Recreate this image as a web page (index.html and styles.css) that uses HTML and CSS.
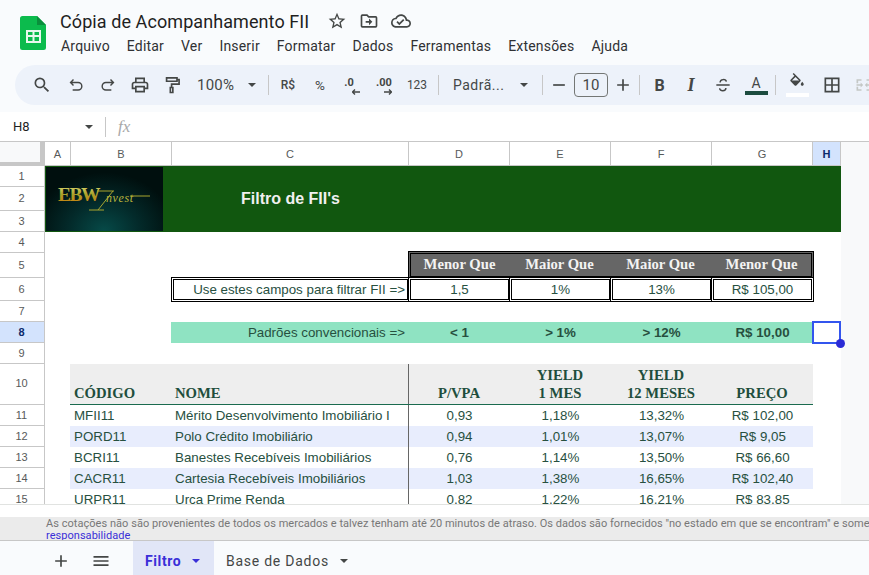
FILE: index.html
```html
<!DOCTYPE html>
<html lang="pt-BR">
<head>
<meta charset="utf-8">
<title>Cópia de Acompanhamento FII</title>
<link rel="stylesheet" href="styles.css">
</head>
<body>
<div class="app">
  <header class="top">
    <svg class="logo-sheets" viewBox="0 0 26 34" width="26" height="34">
      <path d="M2.5 0H17l9 9v22.5a2.5 2.5 0 0 1-2.5 2.5h-21A2.5 2.5 0 0 1 0 31.500V2.500A2.500 2.500 0 0 1 2.500 0z" fill="#0cbb4d"/>
      <path d="M17 0l9 9h-9z" fill="#0a8f3c"/>
      <path d="M6 14h15v13H6zm2 2v3h4.500v-3zm6.500 0v3H19v-3zM8 21v4h4.500v-4zm6.500 0v4H19v-4z" fill="#e9f8ee" fill-rule="evenodd"/>
    </svg>
    <div class="top-main">
      <div class="title-row">
        <span class="doc-title">Cópia de Acompanhamento FII</span>
        <svg class="ti" viewBox="0 0 24 24" width="20" height="20"><path d="M22 9.240l-7.190-.620L12 2 9.190 8.630 2 9.240l5.460 4.730L5.820 21 12 17.270 18.180 21l-1.630-7.030L22 9.240zM12 15.400l-3.760 2.270 1-4.280-3.320-2.880 4.380-.380L12 6.100l1.710 4.040 4.380.380-3.320 2.880 1 4.280L12 15.400z"/></svg>
        <svg class="ti" viewBox="0 0 24 24" width="20" height="20"><path d="M20 6h-8l-2-2H4a2 2 0 0 0-2 2v12a2 2 0 0 0 2 2h16a2 2 0 0 0 2-2V8a2 2 0 0 0-2-2zm0 12H4V6h5.170l2 2H20v10zm-8-1l4-4-4-4v3H8v2h4v3z"/></svg>
        <svg class="ti" viewBox="0 0 24 24" width="20" height="20"><path d="M19.350 10.040C18.670 6.590 15.640 4 12 4 9.110 4 6.600 5.640 5.350 8.040 2.340 8.360 0 10.910 0 14c0 3.310 2.690 6 6 6h13c2.760 0 5-2.240 5-5 0-2.640-2.050-4.780-4.650-4.960zM19 18H6c-2.210 0-4-1.790-4-4 0-2.050 1.530-3.760 3.560-3.970l1.070-.110.500-.950C8.080 7.140 9.940 6 12 6c2.620 0 4.880 1.860 5.390 4.430l.300 1.500 1.530.110c1.560.100 2.780 1.410 2.780 2.960 0 1.650-1.350 3-3 3zm-9-3.820l-2.090-2.090L6.500 13.500 10 17l6.010-6.010-1.410-1.410z"/></svg>
      </div>
      <nav class="menu">
        <span>Arquivo</span><span>Editar</span><span>Ver</span><span>Inserir</span><span>Formatar</span><span>Dados</span><span>Ferramentas</span><span>Extensões</span><span>Ajuda</span>
      </nav>
    </div>
  </header>

  <div class="toolbar">
    <span class="tb"><svg viewBox="0 0 24 24" width="20" height="20"><path d="M15.500 14h-.790l-.280-.270A6.471 6.471 0 0 0 16 9.500 6.500 6.500 0 1 0 9.500 16c1.610 0 3.090-.590 4.230-1.570l.270.280v.790l5 4.990L20.490 19l-4.990-5zm-6 0C7.010 14 5 11.990 5 9.500S7.010 5 9.500 5 14 7.010 14 9.500 11.990 14 9.500 14z"/></svg></span>
    <span class="tb tb-first"><svg class="line thin" viewBox="0 0 24 24" width="20" height="20"><path d="M6 9h8.500a4.500 4.500 0 0 1 0 9H8M9 5.500 5.500 9 9 12.500"/></svg></span>
    <span class="tb"><svg class="line thin" viewBox="0 0 24 24" width="20" height="20"><path d="M18 9H9.500a4.500 4.500 0 0 0 0 9H16M15 5.500 18.500 9 15 12.500"/></svg></span>
    <span class="tb"><svg viewBox="0 0 24 24" width="20" height="20"><path d="M19 8h-1V3H6v5H5c-1.660 0-3 1.340-3 3v6h4v4h12v-4h4v-6c0-1.660-1.340-3-3-3zM8 5h8v3H8V5zm8 12v2H8v-4h8v2zm2-2v-2H6v2H4v-4c0-.550.450-1 1-1h14c.550 0 1 .450 1 1v4h-2z"/></svg></span>
    <span class="tb"><svg class="line" viewBox="0 0 24 24" width="20" height="20"><path d="M18 3.500H5.500v4H18zM18 5.500h2.500v5.500H11.500v4M10 15h3v6h-3z"/></svg></span>
    <span class="zoom"><span>100%</span><i class="caret"></i></span>
    <i class="sep"></i>
    <span class="tb small strong">R$</span>
    <span class="tb pct">%</span>
    <span class="tb dec dec-one"><b>.0</b><svg viewBox="0 0 8 6" width="8" height="6"><path d="M.5 3h7.500M3 .5.500 3 3 5.500" class="stroke"/></svg></span>
    <span class="tb dec"><b>.00</b><svg viewBox="0 0 8 6" width="8" height="6"><path d="M0 3h7.500M5 .5 7.500 3 5 5.500" class="stroke"/></svg></span>
    <span class="tb small num">123</span>
    <i class="sep sep-b"></i>
    <span class="font"><span>Padrã...</span><i class="caret"></i></span>
    <i class="sep sep-c"></i>
    <span class="tb tb-s"><svg viewBox="0 0 24 24" width="20" height="20"><path d="M5 11h14v2H5z"/></svg></span>
    <span class="size">10</span>
    <span class="tb tb-s"><svg viewBox="0 0 24 24" width="20" height="20"><path d="M19 13h-6v6h-2v-6H5v-2h6V5h2v6h6z"/></svg></span>
    <i class="sep sep-d"></i>
    <span class="tb glyph bold">B</span>
    <span class="tb glyph ital">I</span>
    <span class="tb"><svg class="line thin" viewBox="0 0 24 24" width="20" height="20"><path d="M4 12h16M8.500 9c0-4.500 7-4.500 7.500-1M15.500 15.500c0 4.500-7.500 4.500-7.500 .5"/></svg></span>
    <span class="tb color"><span class="a">A</span><i class="bar bar-green"></i></span>
    <i class="sep sep-e"></i>
    <span class="tb color"><svg viewBox="0 0 24 24" width="18" height="18"><path d="M16.560 8.940 7.620 0 6.210 1.410l2.380 2.380-5.150 5.150c-.590.590-.590 1.540 0 2.120l5.500 5.500c.290.290.680.440 1.060.440s.770-.150 1.060-.440l5.500-5.500c.590-.580.590-1.530 0-2.120zM5.210 10 10 5.210 14.790 10H5.210zM19 11.500s-2 2.170-2 3.500c0 1.100.900 2 2 2s2-.900 2-2c0-1.330-2-3.500-2-3.500z"/></svg><i class="bar bar-white"></i></span>
    <span class="tb tb-gap"><svg viewBox="0 0 24 24" width="20" height="20"><path d="M3 3v18h18V3H3zm8 16H5v-6h6v6zm0-8H5V5h6v6zm8 8h-6v-6h6v6zm0-8h-6V5h6v6z"/></svg></span>
    <span class="tb merge"><svg viewBox="0 0 24 24" width="20" height="20"><path d="M3 5h6v2H5v3H3zM3 14h2v3h4v2H3zM15 5h6v5h-2V7h-4zM19 14h2v5h-6v-2h4zM3 11h5V9l3 3-3 3v-2H3zM21 11h-5V9l-3 3 3 3v-2h5z"/></svg></span>
  </div>

  <div class="formula">
    <span class="ref">H8</span><i class="caret caret-ref"></i><i class="sep sep-f"></i><span class="fx">fx</span>
  </div>

  <main class="sheet">
    <div class="corner"></div>
    <div class="colhead">
      <span>A</span><span>B</span><span>C</span><span>D</span><span>E</span><span>F</span><span>G</span><span class="on">H</span>
    </div>
    <div class="rowhead">
      <span class="h21">1</span><span class="h24">2</span><span class="h21">3</span><span class="h21">4</span><span class="h25">5</span><span class="h23">6</span><span class="h21">7</span><span class="h21 on">8</span><span class="h21">9</span><span class="h41">10</span><span class="h21">11</span><span class="h21">12</span><span class="h21">13</span><span class="h21">14</span><span class="h21">15</span>
    </div>
    <div class="cells">
      <div class="banner">
        <div class="brand">
          <svg viewBox="0 0 117 63" width="117" height="63">
            <defs>
              <linearGradient id="gold" x1="0" y1="0" x2="0" y2="1"><stop offset="0" stop-color="#e2e07a"/><stop offset=".5" stop-color="#a9a02a"/><stop offset="1" stop-color="#d07a08"/></linearGradient>
            </defs>
            <text x="12" y="34" class="ebw" fill="url(#gold)">EBW</text>
            <path d="M51 24h17M67 24 52 43M43 43h15M84 29h20" class="flourish"/>
            <text x="60" y="35" class="invest">nvest</text>
          </svg>
        </div>
        <div class="banner-title">Filtro de FII's</div>
      </div>
      <div class="r h21"></div>
      <div class="r h25">
        <div class="filterhead">
          <span>Menor Que</span><span>Maior Que</span><span>Maior Que</span><span>Menor Que</span>
        </div>
      </div>
      <div class="r h23">
        <span class="box c-c right">Use estes campos para filtrar FII =&gt;</span>
        <span class="box">1,5</span><span class="box">1%</span><span class="box">13%</span><span class="box">R$ 105,00</span>
      </div>
      <div class="r h21"></div>
      <div class="r h21 mint">
        <span class="c-c right plain">Padrões convencionais =&gt;</span>
        <b>&lt; 1</b><b>&gt; 1%</b><b>&gt; 12%</b><b>R$ 10,00</b>
        <i class="sel"><i class="handle"></i></i>
      </div>
      <div class="r h21"></div>
      <div class="r h41 thead">
        <span class="pad">CÓDIGO</span><span class="pad divider">NOME</span><span>P/VPA</span><span>YIELD<br>1 MES</span><span>YIELD<br>12 MESES</span><span>PREÇO</span>
      </div>
      <div class="r h21 tr"><span class="pad">MFII11</span><span class="pad divider">Mérito Desenvolvimento Imobiliário I</span><span>0,93</span><span>1,18%</span><span>13,32%</span><span>R$ 102,00</span></div>
      <div class="r h21 tr alt"><span class="pad">PORD11</span><span class="pad divider">Polo Crédito Imobiliário</span><span>0,94</span><span>1,01%</span><span>13,07%</span><span>R$ 9,05</span></div>
      <div class="r h21 tr"><span class="pad">BCRI11</span><span class="pad divider">Banestes Recebíveis Imobiliários</span><span>0,76</span><span>1,14%</span><span>13,50%</span><span>R$ 66,60</span></div>
      <div class="r h21 tr alt"><span class="pad">CACR11</span><span class="pad divider">Cartesia Recebíveis Imobiliários</span><span>1,03</span><span>1,38%</span><span>16,65%</span><span>R$ 102,40</span></div>
      <div class="r h21 tr"><span class="pad">URPR11</span><span class="pad divider">Urca Prime Renda</span><span>0,82</span><span>1,22%</span><span>16,21%</span><span>R$ 83,85</span></div>
    </div>
  </main>

  <div class="scrollgap"></div>
  <div class="notice">
    <span class="notice-line">As cotações não são provenientes de todos os mercados e talvez tenham até 20 minutos de atraso. Os dados são fornecidos "no estado em que se encontram" e somente para fins informativos, não para negociação ou aconselhamento.</span>
    <span class="link">responsabilidade</span>
  </div>

  <footer class="tabs">
    <span class="tab-btn"><svg viewBox="0 0 24 24" width="20" height="20"><path d="M19 13h-6v6h-2v-6H5v-2h6V5h2v6h6z"/></svg></span>
    <span class="tab-btn"><svg viewBox="0 0 24 24" width="20" height="20"><path d="M3 18h18v-2H3zM3 13h18v-2H3zM3 6v2h18V6z"/></svg></span>
    <span class="tab active"><span>Filtro</span><i class="caret"></i></span>
    <span class="tab"><span>Base de Dados</span><i class="caret"></i></span>
  </footer>
</div>
</body>
</html>
```
FILE: styles.css
```css
* { box-sizing: border-box; }
html, body { margin: 0; padding: 0; }
body { background: #f9fbfd; font-family: Roboto, "Liberation Sans", sans-serif; color: #444746; }
i { font-style: normal; }
.app { width: 869px; height: 575px; overflow: hidden; display: flex; flex-direction: column; }
svg { fill: #444746; display: block; flex: none; }
svg.line, svg .stroke { fill: none; stroke: #444746; stroke-width: 2; }
svg .stroke { stroke-width: 1.4; }
svg.line.thin { stroke-width: 1.7; }
.caret { display: block; width: 0; height: 0; border-left: 4px solid transparent; border-right: 4px solid transparent; border-top: 4px solid #444746; flex: none; }

/* header */
.top { height: 65px; flex: none; display: flex; padding: 16px 0 0 20px; }
.top-main { margin-left: 14px; margin-top: -8px; }
.title-row { display: flex; align-items: center; height: 26px; }
.doc-title { font-family: Roboto, sans-serif; font-size: 18px; letter-spacing: .08px; color: #1f1f1f; width: 267px; white-space: nowrap; }
.ti { margin-right: 12px; }
.menu { display: flex; gap: 17px; margin: 1px 0 0 1px; font-size: 14px; line-height: 22px; letter-spacing: .19px; color: #303134; white-space: nowrap; }

/* toolbar */
.toolbar { height: 40px; flex: none; margin: 0 0 7px 15px; padding-left: 11px; width: 900px; background: #edf2fa; border-radius: 20px 0 0 20px; display: flex; align-items: center; }
.tb { width: 32px; height: 40px; flex: none; display: flex; flex-direction: column; align-items: center; justify-content: center; }
.tb-first { margin-left: 2px; }
.tb-s { width: 30px; }
.tb-gap { margin-left: 2px; }
.small { font-size: 12px; font-weight: 500; }
.pct { font-size: 13.500px; }
.num { width: 34px; font-weight: 400; }
.zoom { width: 74px; display: flex; align-items: center; padding-left: 9px; font-size: 15px; flex: none; letter-spacing: .2px; }
.zoom .caret { margin-left: 14px; }
.sep { display: block; width: 1px; height: 20px; background: #c7c7c7; flex: none; margin: 0 3px 0 6px; }
.sep-b { margin: 0 5px 0 4px; }
.sep-c { margin: 0 1px 0 4px; }
.sep-d { margin: 0 3px 0 1px; }
.sep-e { margin: 0 4px 0 2px; }
.font { width: 94px; display: flex; align-items: center; padding-left: 9px; font-size: 14px; letter-spacing: .5px; flex: none; }
.font span { width: 67px; }
.size { width: 34px; height: 24px; flex: none; border: 1px solid #747775; border-radius: 4px; font-size: 15px; text-align: center; line-height: 22px; }
.dec { font-size: 11px; line-height: 10px; margin-top: 2px; }
.dec b { font-weight: 700; font-size: 11px; }
.dec svg { margin-left: 8px; margin-top: 1px; }
.dec-one b { margin-right: 6px; }
.glyph { font-size: 16px; }
.bold { font-weight: 700; padding-left: 1px; }
.ital { font-family: "Liberation Serif", serif; font-style: italic; font-weight: 700; font-size: 18px; }
.color { width: 34px; }
.color .a { font-size: 14px; line-height: 15px; }
.bar { display: block; width: 23px; height: 4px; }
.bar-green { background: #1c4c3f; }
.bar-white { background: #fff; margin-top: 2px; }
.merge svg { fill: #c4c7c5; }

/* formula */
.formula { height: 29px; flex: none; background: #fff; display: flex; align-items: center; padding-left: 13px; }
.ref { width: 72px; font-size: 13px; color: #1f1f1f; }
.sep-f { margin: 0 12px 0 12px; }
.fx { font-family: "Liberation Serif", serif; font-style: italic; font-size: 17px; color: #a8a8a8; }

/* sheet */
.sheet { height: 364px; flex: none; background: #f8f9fa; display: grid; grid-template-columns: 45px 1fr; grid-template-rows: 24px 1fr; overflow: hidden; border-top: 1px solid #c7c7c7; border-bottom: 1px solid #e1e3e1; }
.corner { background: #f8f9fa; border-right: 5px solid #c7c7c7; border-bottom: 4px solid #c7c7c7; }
.colhead { display: grid; grid-template-columns: 26px 101px 237px 101px 101px 101px 101px 28px; background: #fff; width: 796px; }
.colhead span, .rowhead span { font-family: "Liberation Sans", sans-serif; font-size: 11px; color: #575a5a; display: flex; align-items: center; justify-content: center; }
.colhead span { border-right: 1px solid #c7c7c7; border-bottom: 1px solid #c7c7c7; }
.colhead .on, .rowhead .on { background: #d3e3fd; color: #0b2a6b; font-weight: 700; }
.rowhead { display: flex; flex-direction: column; background: #fff; }
.rowhead span { flex: none; border-right: 1px solid #c7c7c7; border-bottom: 1px solid #c7c7c7; padding-right: 1px; padding-bottom: 1px; }
.rowhead .h41 { padding-bottom: 2px; }
.h21 { height: 21px; } .h23 { height: 23px; } .h24 { height: 24px; } .h25 { height: 25px; } .h41 { height: 41px; }
.cells { width: 796px; background: #fff; font-family: "Liberation Sans", sans-serif; font-size: 13.33px; color: #27503f; }
.banner { height: 66px; background: #11570f; display: flex; position: relative; }
.brand { width: 118px; height: 65px; padding: 1px 0 0 1px; background: radial-gradient(ellipse 60% 90% at 50% 100%, #064a48 0%, #032a2a 50%, #000f0e 100%); background-clip: content-box; }
.ebw { font-family: "Liberation Serif", serif; font-size: 19.500px; font-weight: 700; letter-spacing: -1.500px; }
.invest { font-family: "Liberation Serif", serif; font-style: italic; font-size: 12px; fill: #b9b43c; letter-spacing: .6px; }
.flourish { fill: none; stroke: #a9a52f; stroke-width: 1; }
.banner-title { position: absolute; left: 127px; width: 237px; top: 0; height: 66px; display: flex; align-items: center; justify-content: center; font-size: 16px; font-weight: 700; color: #f0f0f0; }
.r { display: grid; grid-template-columns: 26px 101px 237px 101px 101px 101px 101px 28px; position: relative; }
.r > span, .r > b { display: flex; align-items: center; justify-content: center; white-space: nowrap; overflow: hidden; }
.filterhead { grid-column: 4 / span 4; margin: -2px -1px -1px -1px; border: 3px double #000; background: #666; display: grid; grid-template-columns: 99px 101px 101px 101px; font-family: "Liberation Serif", serif; font-weight: 700; font-size: 14.67px; color: #f3f3f3; }
.filterhead span { display: flex; align-items: center; justify-content: center; padding: 0 2px 1px 0; }
.r > .box { border: 3px double #000; margin: -1px -1px -1px -1px; background: #fff; z-index: 1; }
.c-c { grid-column: 3; }
.r > .right { justify-content: flex-end; padding-right: 2px; }
.mint { background: linear-gradient(#8fe3c2, #8fe3c2) 126px 0 / 642px 100% no-repeat; }
.mint b { font-weight: 700; }
.r > .plain { padding-right: 4px; }
.sel { position: absolute; left: 767px; top: -1px; width: 29px; height: 23px; border: 2px solid #3355ee; display: block; }
.handle { position: absolute; right: -6px; bottom: -6px; width: 9px; height: 9px; border-radius: 50%; background: #2b2bd6; display: block; }
.thead { background: linear-gradient(#eeeeee, #eeeeee) 25px 0 / 743px 100% no-repeat; font-family: "Liberation Serif", serif; font-weight: 700; font-size: 14.67px; line-height: 18px; color: #1f4e3d; text-align: center; }
.thead > span { align-items: flex-end; padding-bottom: 3px; padding-right: 1px; }
.thead > .pad { padding-right: 0; }
.thead::after { content: ""; position: absolute; left: 25px; width: 743px; bottom: 0; height: 1px; background: #1a6b4f; }
.tr.alt { background: linear-gradient(#e8edfd, #e8edfd) 25px 0 / 743px 100% no-repeat; }
.r > .pad { justify-content: flex-start; padding-left: 3px; }
.r > .pad:first-child { grid-column: 2; }
.r > .divider { padding-left: 3px; border-right: 1px solid #666; }

/* footer */
.scrollgap { height: 12px; flex: none; background: #fff; }
.notice { height: 24px; flex: none; background: #ebebeb; border-bottom: 1px solid #c7c7c7; padding: 1px 0 0 46px; font-size: 11px; line-height: 11.500px; letter-spacing: .04px; color: #777; overflow: hidden; }
.notice-line, .link { display: block; white-space: nowrap; }
.link { color: #3a2fd8; }
.tabs { flex: 1; display: flex; padding-left: 41px; align-items: stretch; }
.tab-btn { width: 40px; display: flex; align-items: center; justify-content: center; flex: none; padding-top: 6px; }
.tab-btn + .tab-btn + .tab { margin-left: 12px; }
.tab { display: flex; align-items: center; font-size: 14px; font-weight: 400; letter-spacing: .75px; padding: 6px 0 0 12px; flex: none; color: #444746; }
.tab .caret { margin-left: 11px; }
.active { width: 81px; background: #e1e6f7; color: #3a2fd8; font-weight: 700; letter-spacing: .6px; }
.active .caret { border-top-color: #3a2fd8; }
```
